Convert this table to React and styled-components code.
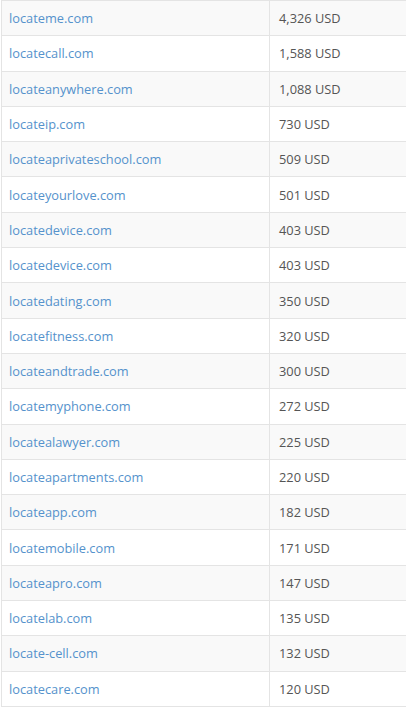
import React from 'react'
import styled, { createGlobalStyle } from 'styled-components'

const GlobalStyle = createGlobalStyle`
  html, body {
    margin: 0;
    padding: 0;
    background: #fff;
  }
  body {
    font-family: "Open Sans", "Liberation Sans", sans-serif;
    overflow: hidden;
  }
`;

const Table = styled.div`
  display: grid;
  grid-template-columns: 268px 1fr;
  grid-auto-rows: 35.3px;
  width: 420px;
  margin-left: 1px;
  border-top: 1px solid #e4e4e4;
  border-left: 1px solid #e4e4e4;
`;

const Cell = styled.div`
  display: flex;
  align-items: center;
  padding: 0 8px 0 7px;
  font-size: 12.8px;
  border-bottom: 1px solid #e4e4e4;
  border-right: 1px solid #e4e4e4;
  background: ${props => (props.$striped ? '#f9f9f9' : '#fff')};
  box-sizing: border-box;
  white-space: nowrap;
`;

const DomainLink = styled.a`
  color: #5592cc;
  text-decoration: none;
`;

const Price = styled.span`
  color: #555;
  padding-left: 2px;
`;

const rows = [
  ['locateme.com', '4,326 USD'],
  ['locatecall.com', '1,588 USD'],
  ['locateanywhere.com', '1,088 USD'],
  ['locateip.com', '730 USD'],
  ['locateaprivateschool.com', '509 USD'],
  ['locateyourlove.com', '501 USD'],
  ['locatedevice.com', '403 USD'],
  ['locatedevice.com', '403 USD'],
  ['locatedating.com', '350 USD'],
  ['locatefitness.com', '320 USD'],
  ['locateandtrade.com', '300 USD'],
  ['locatemyphone.com', '272 USD'],
  ['locatealawyer.com', '225 USD'],
  ['locateapartments.com', '220 USD'],
  ['locateapp.com', '182 USD'],
  ['locatemobile.com', '171 USD'],
  ['locateapro.com', '147 USD'],
  ['locatelab.com', '135 USD'],
  ['locate-cell.com', '132 USD'],
  ['locatecare.com', '120 USD'],
]

const App = () => {
  return (
    <>
      <GlobalStyle />
      <Table>
        {rows.map(([domain, price], i) => (
          <React.Fragment key={i}>
            <Cell $striped={i % 2 === 0}>
              <DomainLink href="#">{domain}</DomainLink>
            </Cell>
            <Cell $striped={i % 2 === 0}>
              <Price>{price}</Price>
            </Cell>
          </React.Fragment>
        ))}
      </Table>
    </>
  )
}

export default App
